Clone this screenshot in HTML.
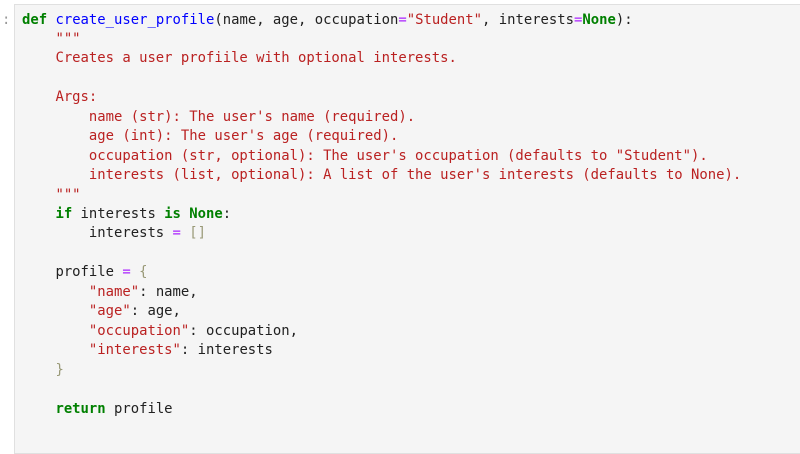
<!DOCTYPE html>
<html><head><style>
html,body{margin:0;padding:0;background:#fff;width:800px;height:440px;overflow:hidden}
.p{position:absolute;left:2px;top:11px;font:13.9px "DejaVu Sans Mono",monospace;color:#999;line-height:19.45px}
.cell{position:absolute;left:14px;top:4px;width:800px;height:450px;background:#f5f5f5;border:1px solid #e0e0e0;box-sizing:border-box}
pre{position:absolute;left:22px;top:10.5px;margin:0;font:13.9px "DejaVu Sans Mono",monospace;line-height:19.45px;color:#212121}
.k{color:#008000;font-weight:bold}.f{color:#0000ff}.s{color:#ba2121}.o{color:#aa22ff}.b{color:#999977}
</style></head><body>
<div class="p">:</div>
<div class="cell"></div>
<pre><span class="k">def</span> <span class="f">create_user_profile</span>(name, age, occupation<span class="o">=</span><span class="s">"Student"</span>, interests<span class="o">=</span><span class="k">None</span>):
<span class="s">    """
    Creates a user profiile with optional interests.

    Args:
        name (str): The user's name (required).
        age (int): The user's age (required).
        occupation (str, optional): The user's occupation (defaults to "Student").
        interests (list, optional): A list of the user's interests (defaults to None).
    """</span>
    <span class="k">if</span> interests <span class="k">is</span> <span class="k">None</span>:
        interests <span class="o">=</span> <span class="b">[]</span>

    profile <span class="o">=</span> <span class="b">{</span>
        <span class="s">"name"</span>: name,
        <span class="s">"age"</span>: age,
        <span class="s">"occupation"</span>: occupation,
        <span class="s">"interests"</span>: interests
    <span class="b">}</span>

    <span class="k">return</span> profile</pre>
</body></html>
